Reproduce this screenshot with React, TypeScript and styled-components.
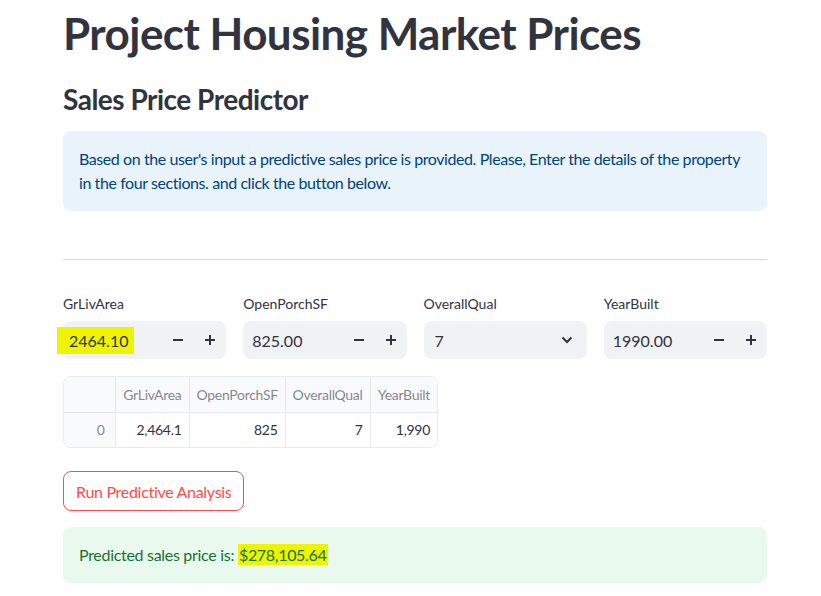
import React from "react";
import styled, { createGlobalStyle } from "styled-components";

const Global = createGlobalStyle`
  html, body { margin: 0; padding: 0; background: #ffffff; }
  body { font-family: Lato, "Noto Sans", sans-serif; color: rgb(49, 51, 63); }
  * { box-sizing: border-box; }
`;

const Page = styled.main`
  width: 821px;
  padding: 0 54px 0 63px;
  display: flex;
  flex-direction: column;
`;

const Title = styled.h1`
  margin: 7px 0 0 0;
  font-weight: 700;
  font-size: 44px;
  line-height: 52px;
  letter-spacing: -0.55px;
  color: rgb(49, 51, 63);
`;

const Subtitle = styled.h2`
  margin: 22px 0 0 0;
  font-weight: 700;
  font-size: 28px;
  line-height: 36px;
  letter-spacing: -0.5px;
  color: rgb(49, 51, 63);
`;

const Alert = styled.div<{ $tone: "info" | "success" }>`
  border-radius: 8px;
  padding: 16px;
  font-size: 16px;
  line-height: 24px;
  letter-spacing: -0.3px;
  background: ${(p) => (p.$tone === "info" ? "rgb(232, 243, 252)" : "rgb(233, 249, 238)")};
  color: ${(p) => (p.$tone === "info" ? "rgb(0, 66, 128)" : "rgb(23, 114, 51)")};
`;

const InfoAlert = styled(Alert)`
  margin-top: 14px;
  padding-right: 12px;
  letter-spacing: -0.42px;
`;

const Divider = styled.hr`
  margin: 48px 0 0 0;
  border: none;
  border-top: 1px solid rgba(49, 51, 63, 0.2);
  height: 0;
`;

const Columns = styled.div`
  margin-top: 34px;
  display: grid;
  grid-template-columns: repeat(4, 1fr);
  column-gap: 17px;
`;

const Field = styled.div`
  display: flex;
  flex-direction: column;
`;

const Label = styled.label`
  font-size: 14px;
  line-height: 20px;
  height: 20px;
  margin-bottom: 7px;
  color: rgb(49, 51, 63);
`;

const InputBox = styled.div`
  height: 38px;
  background: rgb(240, 242, 246);
  border-radius: 8px;
  display: flex;
  align-items: center;
`;

const Value = styled.span`
  flex: 1;
  padding-left: 9px;
  font-size: 16px;
  color: rgb(49, 51, 63);
`;

const Highlight = styled.mark`
  background: #eef400;
  color: rgb(49, 51, 63);
  padding: 4px 6px 4px 12px;
  margin-left: -15px;
`;

const StepButton = styled.span`
  width: 32px;
  height: 38px;
  display: flex;
  align-items: center;
  justify-content: center;
`;

const Chevron = styled.span`
  width: 40px;
  display: flex;
  align-items: center;
  justify-content: center;
`;

const SelectValue = styled(Value)`
  padding-left: 11px;
`;

const TableWrap = styled.div`
  margin-top: 17px;
  align-self: flex-start;
  border: 1px solid rgba(49, 51, 63, 0.1);
  border-radius: 8px;
  overflow: hidden;
`;

const Table = styled.table`
  border-collapse: collapse;
  font-size: 14px;
  letter-spacing: -0.3px;
  table-layout: fixed;
  width: 373px;
`;

const Th = styled.th<{ $w: number }>`
  width: ${(p) => p.$w}px;
  height: 35px;
  padding: 0 7px;
  text-align: right;
  font-weight: 400;
  white-space: nowrap;
  color: rgba(49, 51, 63, 0.6);
  background: rgb(249, 250, 251);
  border-left: 1px solid rgba(49, 51, 63, 0.1);
  border-bottom: 1px solid rgba(49, 51, 63, 0.1);
  &:first-child { border-left: none; }
`;

const Td = styled.td<{ $index?: boolean }>`
  height: 35px;
  padding: 0 ${(p) => (p.$index ? 10 : 7)}px 0 7px;
  text-align: right;
  color: ${(p) => (p.$index ? "rgba(49, 51, 63, 0.6)" : "rgb(49, 51, 63)")};
  background: ${(p) => (p.$index ? "rgb(249, 250, 251)" : "#fff")};
  border-left: 1px solid rgba(49, 51, 63, 0.1);
  &:first-child { border-left: none; }
`;

const Button = styled.button`
  margin-top: 23px;
  align-self: flex-start;
  height: 40px;
  padding: 0 12px;
  white-space: nowrap;
  border: 1px solid rgb(255, 75, 75);
  border-radius: 8px;
  background: #fff;
  color: rgb(255, 75, 75);
  font-family: Lato, "Noto Sans", sans-serif;
  font-size: 16px;
  letter-spacing: -0.3px;
`;

const SuccessAlert = styled(Alert)`
  margin-top: 16px;
`;

const PriceMark = styled.mark`
  background: #eef400;
  color: rgb(23, 114, 51);
  padding: 1px 1px;
`;

const Minus = () => (
  <svg width="10" height="2" viewBox="0 0 10 2"><rect width="10" height="2" fill="rgb(49,51,63)" /></svg>
);
const Plus = () => (
  <svg width="10" height="10" viewBox="0 0 10 10">
    <rect y="4" width="10" height="2" fill="rgb(49,51,63)" />
    <rect x="4" width="2" height="10" fill="rgb(49,51,63)" />
  </svg>
);

const NumberField = ({ label, value, mark }: { label: string; value: string; mark?: boolean }) => (
  <Field>
    <Label>{label}</Label>
    <InputBox>
      <Value>{mark ? <Highlight>{value}</Highlight> : value}</Value>
      <StepButton><Minus /></StepButton>
      <StepButton><Plus /></StepButton>
    </InputBox>
  </Field>
);

export default function App() {
  const cols = [
    { name: "", w: 51 },
    { name: "GrLivArea", w: 74 },
    { name: "OpenPorchSF", w: 96 },
    { name: "OverallQual", w: 85 },
    { name: "YearBuilt", w: 67 },
  ];
  return (
    <Page>
      <Global />
      <Title>Project Housing Market Prices</Title>
      <Subtitle>Sales Price Predictor</Subtitle>
      <InfoAlert $tone="info">
        Based on the user's input a predictive sales price is provided. Please, Enter the details of the property in the four sections. and click the button below.
      </InfoAlert>
      <Divider />
      <Columns>
        <NumberField label="GrLivArea" value="2464.10" mark />
        <NumberField label="OpenPorchSF" value="825.00" />
        <Field>
          <Label>OverallQual</Label>
          <InputBox>
            <SelectValue>7</SelectValue>
            <Chevron>
              <svg width="12" height="8" viewBox="0 0 12 8">
                <path d="M1.5 1.5 L6 6 L10.5 1.5" fill="none" stroke="rgb(49,51,63)" strokeWidth="2" />
              </svg>
            </Chevron>
          </InputBox>
        </Field>
        <NumberField label="YearBuilt" value="1990.00" />
      </Columns>
      <TableWrap>
        <Table>
          <thead>
            <tr>
              {cols.map((c) => (
                <Th key={c.name} $w={c.w}>{c.name}</Th>
              ))}
            </tr>
          </thead>
          <tbody>
            <tr>
              <Td $index>0</Td>
              <Td>2,464.1</Td>
              <Td>825</Td>
              <Td>7</Td>
              <Td>1,990</Td>
            </tr>
          </tbody>
        </Table>
      </TableWrap>
      <Button>Run Predictive Analysis</Button>
      <SuccessAlert $tone="success">
        Predicted sales price is: <PriceMark>$278,105.64</PriceMark>
      </SuccessAlert>
    </Page>
  );
}
